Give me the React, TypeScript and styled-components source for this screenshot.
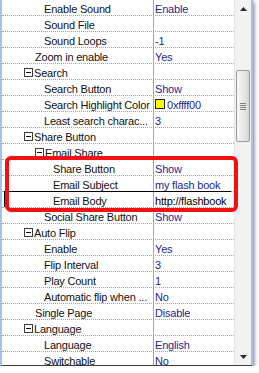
import React from "react";
import styled, { createGlobalStyle } from "styled-components";

const Global = createGlobalStyle`
  html, body { margin: 0; padding: 0; background: #ffffff; }
  body { font-family: "Liberation Sans", Arial, sans-serif; }
`;

type RowData = {
  label: string;
  value?: string;
  level: number;
  category?: boolean;
  kind?: "color" | "edit";
};

const rows: RowData[] = [
  { label: "Enable Sound", value: "Enable", level: 2 },
  { label: "Sound File", value: "", level: 2 },
  { label: "Sound Loops", value: "-1", level: 2 },
  { label: "Zoom in enable", value: "Yes", level: 1 },
  { label: "Search", level: 0, category: true },
  { label: "Search Button", value: "Show", level: 2 },
  { label: "Search Highlight Color", value: "0xffff00", level: 2, kind: "color" },
  { label: "Least search charac...", value: "3", level: 2 },
  { label: "Share Button", level: 0, category: true },
  { label: "Email Share", level: 1, category: true },
  { label: "Share Button", value: "Show", level: 3 },
  { label: "Email Subject", value: "my flash book", level: 3 },
  { label: "Email Body", value: "http://flashbook", level: 3, kind: "edit" },
  { label: "Social Share Button", value: "Show", level: 2 },
  { label: "Auto Flip", level: 0, category: true },
  { label: "Enable", value: "Yes", level: 2 },
  { label: "Flip Interval", value: "3", level: 2 },
  { label: "Play Count", value: "1", level: 2 },
  { label: "Automatic flip when ...", value: "No", level: 2 },
  { label: "Single Page", value: "Disable", level: 1 },
  { label: "Language", level: 0, category: true },
  { label: "Language", value: "English", level: 2 },
  { label: "Switchable", value: "No", level: 2 },
];

const Frame = styled.div`
  position: relative;
  width: 253px;
  height: 366px;
  box-sizing: border-box;
  display: flex;
  border-left: 2px solid #a3c1ea;
  border-right: 2px solid #a3c1ea;
  border-bottom: 1px solid #3c3c3c;
  box-shadow: 1px 2px 4px rgba(0, 0, 0, 0.55);
  background: #ffffff;
`;

const Grid = styled.div`
  flex: 1;
  overflow: hidden;
  display: flex;
  flex-direction: column;
  font-size: 11px;
  letter-spacing: -0.2px;
`;

const Row = styled.div<{ $editing?: boolean }>`
  position: relative;
  flex: 0 0 16px;
  height: 16px;
  box-sizing: border-box;
  display: flex;
  border-bottom: 1px dotted #a3a3a3;
  ${(p) =>
    p.$editing
      ? `
    &::before {
      content: "";
      position: absolute;
      left: 2px;
      right: 3px;
      top: -1px;
      height: 1px;
      background: #000;
    }
    &::after {
      content: "";
      position: absolute;
      left: 2px;
      top: -1px;
      bottom: 0;
      width: 1px;
      background: #000;
    }
  `
      : ""}
`;

const LabelCell = styled.div<{ $indent: number }>`
  flex: 0 0 152px;
  box-sizing: border-box;
  border-right: 1px solid #a8a8a8;
  padding-left: ${(p) => p.$indent}px;
  padding-top: 2px;
  display: flex;
  align-items: center;
  gap: 1px;
  color: #111111;
  white-space: nowrap;
  overflow: hidden;
`;

const ValueCell = styled.div<{ $editing?: boolean }>`
  flex: 1;
  min-width: 0;
  padding-left: 1px;
  padding-top: 2px;
  display: flex;
  align-items: center;
  gap: 2px;
  color: ${(p) => (p.$editing ? "#000000" : "#1f1f90")};
  background: #ffffff;
  white-space: nowrap;
  overflow: hidden;
`;

const Swatch = styled.span`
  flex: 0 0 auto;
  width: 10px;
  height: 10px;
  box-sizing: border-box;
  border: 1px solid #202020;
  background: #ffff00;
  margin-top: -1px;
`;

const Expander = styled.svg`
  flex: 0 0 auto;
  margin-top: -1px;
`;

const Scrollbar = styled.div`
  flex: 0 0 17px;
  display: flex;
  flex-direction: column;
  background: #f2f2f2;
  border-left: 1px solid #e4e4e4;
  box-sizing: border-box;
`;

const ArrowButton = styled.div`
  flex: 0 0 17px;
  display: flex;
  align-items: center;
  justify-content: center;
`;

const Track = styled.div`
  flex: 1;
  display: flex;
  flex-direction: column;
  align-items: center;
`;

const Thumb = styled.div<{ $top: number; $size: number }>`
  margin-top: ${(p) => p.$top}px;
  width: 14px;
  height: ${(p) => p.$size}px;
  box-sizing: border-box;
  border: 1px solid #9c9c9c;
  border-radius: 2px;
  background: linear-gradient(to right, #f7f7f7, #e2e2e2 70%, #d2d2d2);
  display: flex;
  flex-direction: column;
  align-items: center;
  justify-content: center;
  gap: 1px;
`;

const Grip = styled.span`
  width: 6px;
  height: 1px;
  background: #808080;
`;

const Highlight = styled.div`
  position: absolute;
  left: 3px;
  top: 156px;
  width: 233px;
  height: 56px;
  box-sizing: border-box;
  border: 4px solid #f21010;
  border-radius: 6px;
  pointer-events: none;
`;

function labelIndent(r: RowData) {
  if (r.category) return 22 + 11 * r.level;
  return 24 + 9 * r.level;
}

function ExpandBox() {
  return (
    <Expander width="9" height="9" viewBox="0 0 9 9">
      <rect x="0.5" y="0.5" width="8" height="8" fill="#fff" stroke="#3a3a3a" />
      <line x1="2" y1="4.5" x2="7" y2="4.5" stroke="#111" />
    </Expander>
  );
}

export default function App() {
  return (
    <>
      <Global />
      <Frame>
        <Grid>
          {rows.map((r, i) => (
            <Row key={i} $editing={r.kind === "edit"}>
              <LabelCell $indent={labelIndent(r)}>
                {r.category && <ExpandBox />}
                <span>{r.label}</span>
              </LabelCell>
              <ValueCell $editing={r.kind === "edit"}>
                {r.kind === "color" && <Swatch />}
                {r.value && <span>{r.value}</span>}
              </ValueCell>
            </Row>
          ))}
        </Grid>
        <Scrollbar>
          <ArrowButton>
            <svg width="7" height="4" viewBox="0 0 7 4">
              <path d="M0 4 L3.5 0 L7 4 Z" fill="#2a2a2a" />
            </svg>
          </ArrowButton>
          <Track>
            <Thumb $top={53} $size={72}>
              <Grip />
              <Grip />
              <Grip />
              <Grip />
            </Thumb>
          </Track>
          <ArrowButton>
            <svg width="7" height="4" viewBox="0 0 7 4">
              <path d="M0 0 L7 0 L3.5 4 Z" fill="#2a2a2a" />
            </svg>
          </ArrowButton>
        </Scrollbar>
        <Highlight />
      </Frame>
    </>
  );
}
